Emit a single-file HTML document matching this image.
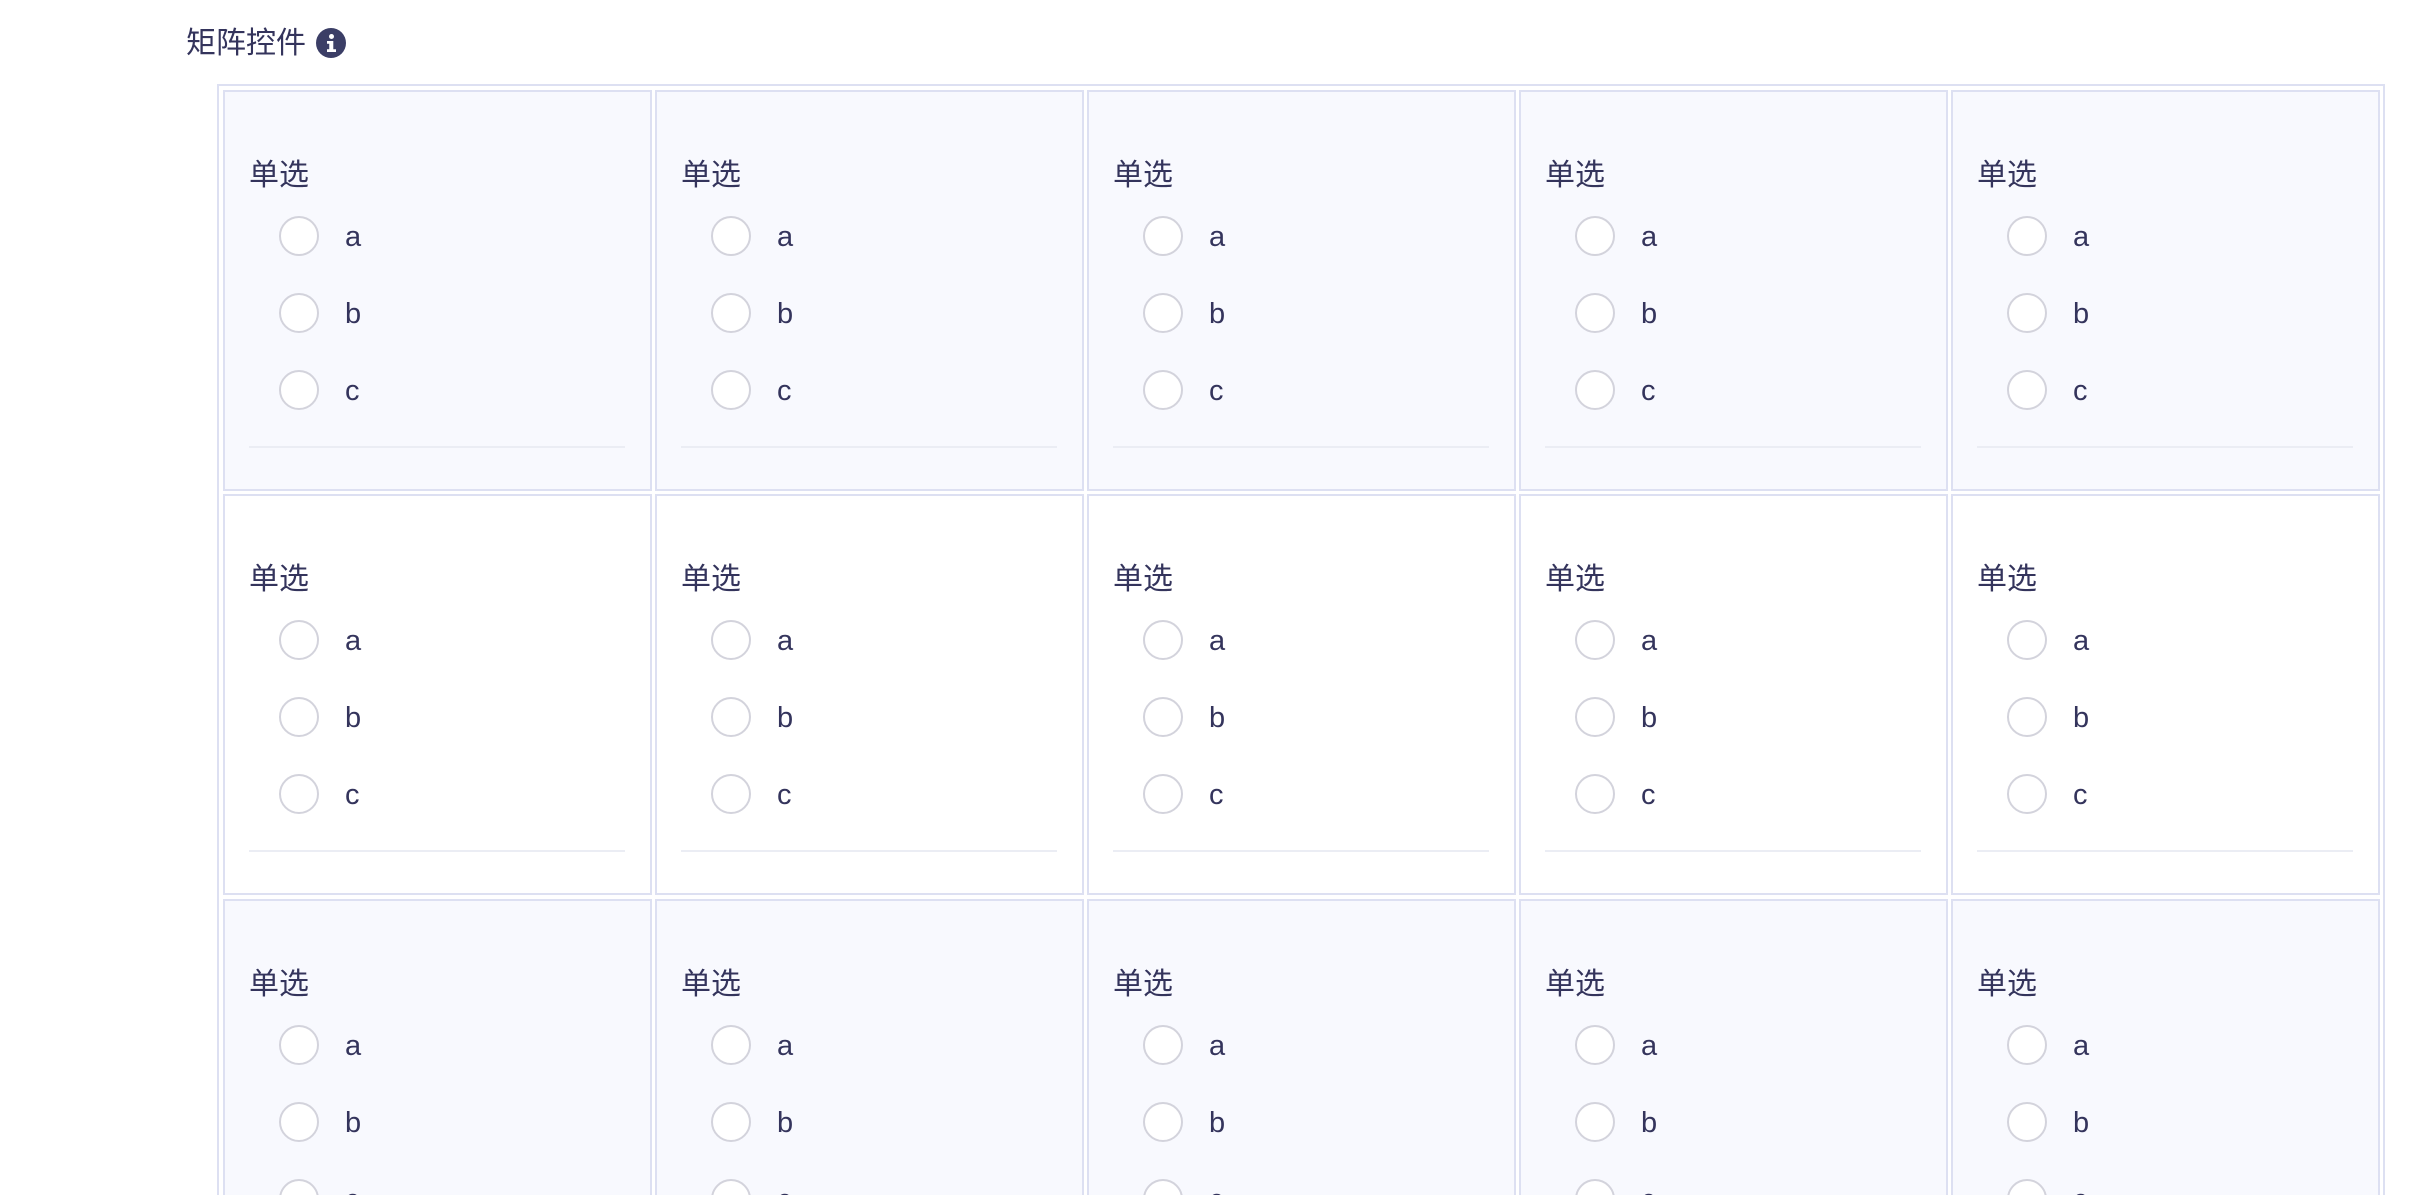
<!DOCTYPE html>
<html><head><meta charset="utf-8">
<style>
html,body{margin:0;padding:0;background:#fff;width:2420px;height:1195px;overflow:hidden;}
#wrap{position:relative;width:2420px;height:1195px;overflow:hidden;font-family:"Liberation Sans","Noto Sans CJK SC",sans-serif;color:#34345c;}
.title{position:absolute;left:186px;top:25px;font-size:30px;line-height:38px;color:#34345c;}
.info{position:absolute;left:316px;top:28px;width:30px;height:30px;border-radius:50%;background:#3b3e66;}
.info:before{content:"";position:absolute;left:13px;top:6px;width:5px;height:5px;border-radius:50%;background:#fff;}
.info:after{content:"";position:absolute;left:11px;top:13px;width:9px;height:11px;background:#fff;clip-path:polygon(0 0,70% 0,70% 75%,100% 75%,100% 100%,0 100%,0 75%,25% 75%,25% 25%,0 25%);}
.outer{position:absolute;left:217px;top:84px;width:2168px;height:1111px;border:2px solid #dde0f2;border-bottom:none;box-sizing:border-box;}
.cell{position:absolute;width:429px;height:401px;border:2px solid #dde0f2;box-sizing:border-box;background:#f8f9fe;overflow:hidden;}
.w{background:#fff;}
.b3{top:899px;height:296px;border-bottom:none;}
.lb{position:absolute;left:24px;top:66px;font-size:30px;line-height:36px;}
.r{position:absolute;left:54px;width:40px;height:40px;border:2px solid #d3d3dc;border-radius:50%;box-sizing:border-box;background:#fff;}
.t{position:absolute;left:120px;font-size:29px;line-height:34px;}
.hr{position:absolute;left:24px;width:376px;top:354px;height:2px;background:#ebedf4;}
</style></head><body><div id="wrap">
<div class="title">矩阵控件</div><div class="info"></div>
<div class="outer"></div>

<div class="cell" style="left:223px;top:90px"><div class="lb">单选</div><div class="r" style="top:124px"></div><div class="t" style="top:128px">a</div><div class="r" style="top:201px"></div><div class="t" style="top:205px">b</div><div class="r" style="top:278px"></div><div class="t" style="top:282px">c</div><div class="hr"></div></div>
<div class="cell" style="left:655px;top:90px"><div class="lb">单选</div><div class="r" style="top:124px"></div><div class="t" style="top:128px">a</div><div class="r" style="top:201px"></div><div class="t" style="top:205px">b</div><div class="r" style="top:278px"></div><div class="t" style="top:282px">c</div><div class="hr"></div></div>
<div class="cell" style="left:1087px;top:90px"><div class="lb">单选</div><div class="r" style="top:124px"></div><div class="t" style="top:128px">a</div><div class="r" style="top:201px"></div><div class="t" style="top:205px">b</div><div class="r" style="top:278px"></div><div class="t" style="top:282px">c</div><div class="hr"></div></div>
<div class="cell" style="left:1519px;top:90px"><div class="lb">单选</div><div class="r" style="top:124px"></div><div class="t" style="top:128px">a</div><div class="r" style="top:201px"></div><div class="t" style="top:205px">b</div><div class="r" style="top:278px"></div><div class="t" style="top:282px">c</div><div class="hr"></div></div>
<div class="cell" style="left:1951px;top:90px"><div class="lb">单选</div><div class="r" style="top:124px"></div><div class="t" style="top:128px">a</div><div class="r" style="top:201px"></div><div class="t" style="top:205px">b</div><div class="r" style="top:278px"></div><div class="t" style="top:282px">c</div><div class="hr"></div></div>

<div class="cell w" style="left:223px;top:494px"><div class="lb">单选</div><div class="r" style="top:124px"></div><div class="t" style="top:128px">a</div><div class="r" style="top:201px"></div><div class="t" style="top:205px">b</div><div class="r" style="top:278px"></div><div class="t" style="top:282px">c</div><div class="hr"></div></div>
<div class="cell w" style="left:655px;top:494px"><div class="lb">单选</div><div class="r" style="top:124px"></div><div class="t" style="top:128px">a</div><div class="r" style="top:201px"></div><div class="t" style="top:205px">b</div><div class="r" style="top:278px"></div><div class="t" style="top:282px">c</div><div class="hr"></div></div>
<div class="cell w" style="left:1087px;top:494px"><div class="lb">单选</div><div class="r" style="top:124px"></div><div class="t" style="top:128px">a</div><div class="r" style="top:201px"></div><div class="t" style="top:205px">b</div><div class="r" style="top:278px"></div><div class="t" style="top:282px">c</div><div class="hr"></div></div>
<div class="cell w" style="left:1519px;top:494px"><div class="lb">单选</div><div class="r" style="top:124px"></div><div class="t" style="top:128px">a</div><div class="r" style="top:201px"></div><div class="t" style="top:205px">b</div><div class="r" style="top:278px"></div><div class="t" style="top:282px">c</div><div class="hr"></div></div>
<div class="cell w" style="left:1951px;top:494px"><div class="lb">单选</div><div class="r" style="top:124px"></div><div class="t" style="top:128px">a</div><div class="r" style="top:201px"></div><div class="t" style="top:205px">b</div><div class="r" style="top:278px"></div><div class="t" style="top:282px">c</div><div class="hr"></div></div>

<div class="cell b3" style="left:223px"><div class="lb">单选</div><div class="r" style="top:124px"></div><div class="t" style="top:128px">a</div><div class="r" style="top:201px"></div><div class="t" style="top:205px">b</div><div class="r" style="top:278px"></div><div class="t" style="top:282px">c</div></div>
<div class="cell b3" style="left:655px"><div class="lb">单选</div><div class="r" style="top:124px"></div><div class="t" style="top:128px">a</div><div class="r" style="top:201px"></div><div class="t" style="top:205px">b</div><div class="r" style="top:278px"></div><div class="t" style="top:282px">c</div></div>
<div class="cell b3" style="left:1087px"><div class="lb">单选</div><div class="r" style="top:124px"></div><div class="t" style="top:128px">a</div><div class="r" style="top:201px"></div><div class="t" style="top:205px">b</div><div class="r" style="top:278px"></div><div class="t" style="top:282px">c</div></div>
<div class="cell b3" style="left:1519px"><div class="lb">单选</div><div class="r" style="top:124px"></div><div class="t" style="top:128px">a</div><div class="r" style="top:201px"></div><div class="t" style="top:205px">b</div><div class="r" style="top:278px"></div><div class="t" style="top:282px">c</div></div>
<div class="cell b3" style="left:1951px"><div class="lb">单选</div><div class="r" style="top:124px"></div><div class="t" style="top:128px">a</div><div class="r" style="top:201px"></div><div class="t" style="top:205px">b</div><div class="r" style="top:278px"></div><div class="t" style="top:282px">c</div></div>
</div></body></html>
